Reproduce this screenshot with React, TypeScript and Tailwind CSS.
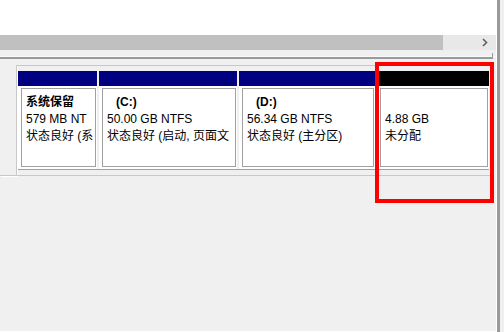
import React from "react";

type Partition = {
  key: string;
  width: string;
  header: string;
  lines: { text: string; bold?: boolean; indent?: boolean }[];
};

const partitions: Partition[] = [
  {
    key: "sys",
    width: "w-[79px]",
    header: "bg-[#000080]",
    lines: [
      { text: "系统保留", bold: true },
      { text: "579 MB NT" },
      { text: "状态良好 (系" },
    ],
  },
  {
    key: "c",
    width: "w-[138px]",
    header: "bg-[#000080]",
    lines: [
      { text: "(C:)", bold: true, indent: true },
      { text: "50.00 GB NTFS" },
      { text: "状态良好 (启动, 页面文" },
    ],
  },
  {
    key: "d",
    width: "w-[136px]",
    header: "bg-[#000080]",
    lines: [
      { text: "(D:)", bold: true, indent: true },
      { text: "56.34 GB NTFS" },
      { text: "状态良好 (主分区)" },
    ],
  },
  {
    key: "free",
    width: "w-[112px]",
    header: "bg-black",
    lines: [{ text: "" }, { text: "4.88 GB" }, { text: "未分配" }],
  },
];

const PartitionBlock = ({ p }: { p: Partition }) => (
  <div className={`${p.width} flex flex-col shrink-0`}>
    <div className={`h-[15px] ${p.header}`} />
    <div className="h-[83px] bg-white pl-[3px] pr-[1px] py-[2px]">
      <div className="h-full border border-[#a0a0a0] pl-[4px] pr-[2px] pt-[5px]">
        {p.lines.map((l, i) => (
          <div
            key={i}
            className={`h-[17px] leading-[17px] overflow-hidden whitespace-nowrap text-[12px] text-black ${l.bold ? "font-bold" : ""} ${l.indent ? "pl-[9px]" : ""}`}
          >
            {l.text}
          </div>
        ))}
      </div>
    </div>
  </div>
);

export default function App() {
  return (
    <div className="relative flex w-[504px] h-[332px] bg-[#f0f0f0] overflow-hidden font-['Liberation_Sans','Noto_Sans_CJK_SC',sans-serif]">
      <div className="w-[496px] flex flex-col shrink-0">
        {/* top list area */}
        <div className="h-[35px] bg-white" />

        {/* horizontal scrollbar */}
        <div className="h-[15px] flex">
          <div className="w-[443px] bg-[#c0c0c0]" />
          <div className="flex-1 bg-[#e8e8e8] flex items-center justify-end pr-[8px]">
            <svg width="6" height="9" viewBox="0 0 6 9">
              <path d="M1 1 L4.5 4.5 L1 8" fill="none" stroke="#606060" strokeWidth="1.6" />
            </svg>
          </div>
        </div>

        <div className="h-[7px] border-b border-[#fafafa]" />
        <div className="flex">
          <div className="w-[492px] h-[2px] bg-[#9a9a9a]" />
          <div className="w-px h-[2px] bg-[#9a9a9a] relative">
            <div className="absolute left-0 bottom-0 w-px h-[6px] bg-[#9a9a9a]" />
          </div>
        </div>
        <div className="h-[6px]" />

        {/* disk row */}
        <div className="flex">
          <div className="w-[17px] h-[111px] bg-[#f0f0f0] border-r border-b border-[#c8c8c8] shadow-[1px_1px_0_#ffffff]" />
          <div className="w-[476px] border-t border-b border-[#c8c8c8] pt-[5px] pb-[4px] pl-px">
            <div className="flex gap-[2px] border-b border-[#a0a0a0] w-fit">
              {partitions.map((p) => (
                <PartitionBlock key={p.key} p={p} />
              ))}
            </div>
          </div>
        </div>

        <div className="flex-1" />
        <div className="h-px bg-white" />
      </div>

      {/* window right edge */}
      <div className="w-px bg-white" />
      <div className="w-[3px] bg-[#9a9a9a]" />
      <div className="flex-1 bg-[#f0f0f0]" />

      {/* red highlight around unallocated space */}
      <div className="absolute left-[375px] top-[62px] w-[119px] h-[141px] border-[4px] border-[#ff0000]" />
    </div>
  );
}
